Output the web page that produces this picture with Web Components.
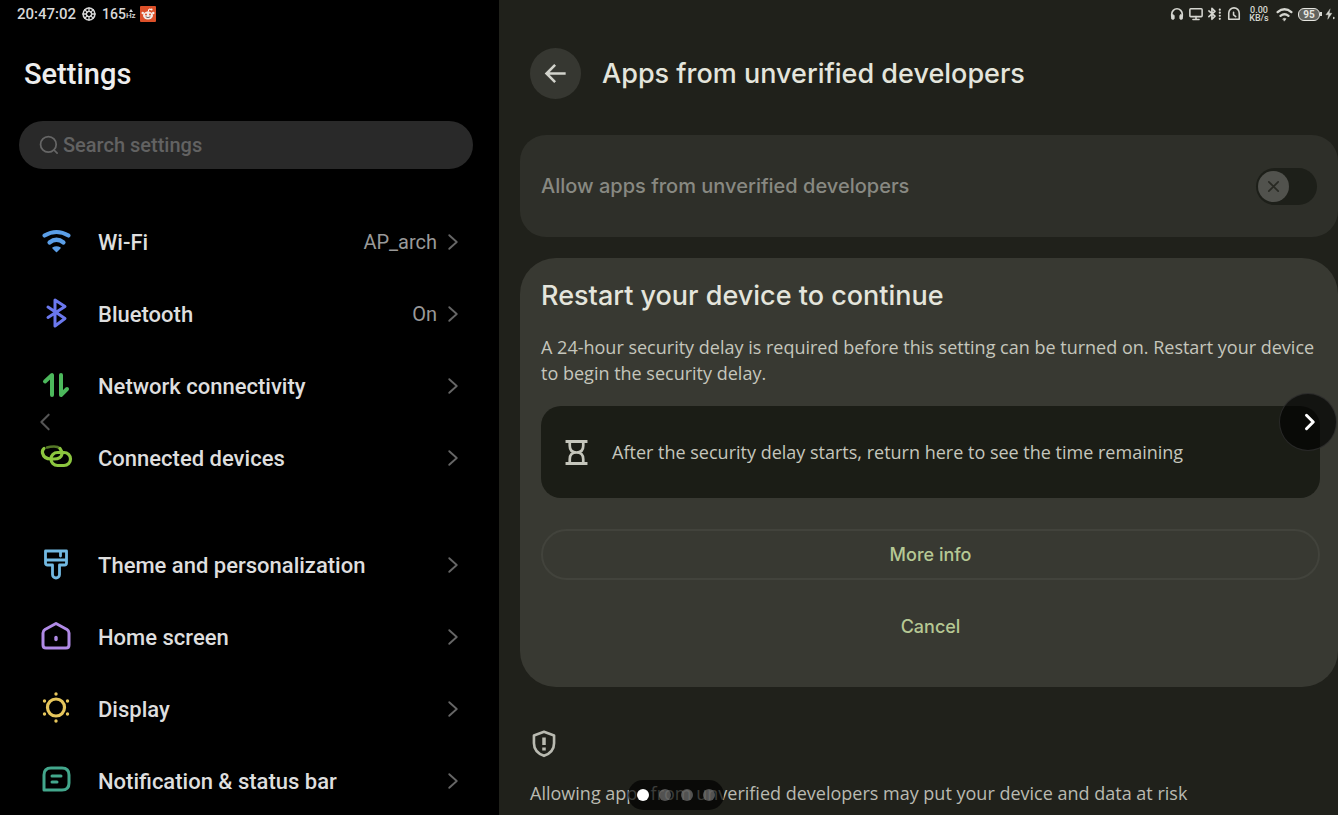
<!DOCTYPE html>
<html lang="en">
<head>
<meta charset="utf-8">
<meta name="viewport" content="width=device-width, initial-scale=1">
<title>Settings</title>
<style>
    body {
        margin: 0;
        background: #000;
        font-family: Roboto, "Liberation Sans", sans-serif;
    }
</style>
</head>
<body>
<settings-app></settings-app>

<script>
const icons = {
    wifi: `<g stroke-width="4.200"><path d="M4.500 9.500Q16.500 2.500 28.500 9.500M9.500 16.500Q16.500 11 23.500 16.500"/></g><path d="M13 22q3.500-2 7 0l-3.500 3.500z" fill="currentColor" stroke-width="1.500"/>`,
    bluetooth: `<path d="M8 9l17 11.500-10 7.500V2l10 6.500L8 19.500" stroke-width="3"/>`,
    network: `<path d="M5 11.500L12 5v20M21 5v20l6-6" stroke-width="4"/>`,
    link: `<path d="M7 5.500Q10 4.500 14 4.500T20 6.500" stroke-width="2.500" opacity=".6"/><path d="M4 6.500Q2 8 2.500 11 4 17 11 17h3q7 0 8-5 0-3-2-5.500" stroke-width="3.200"/><rect x="11" y="10.500" width="19.500" height="13" rx="6.500" stroke-width="3.200"/>`,
    brush: `<path d="M5.500 2h21v12q0 2-2 2h-5v9.500a3.500 3.500 0 0 1-7 0V16h-5q-2 0-2-2zM5.500 11h21M20.500 2v5" stroke-width="2.800"/>`,
    home: `<path d="M16 2.500l11 6q2 1.200 2 3.500v12q0 3-3 3H6q-3 0-3-3V12q0-2.300 2-3.500z" stroke-width="3"/><path d="M16 16.500v2" stroke-width="3.400"/>`,
    sun: `<circle cx="16" cy="14.500" r="8.500" stroke-width="3.200"/><path d="M16 1v.010M16 28v.010M4.500 8v.010M27.500 8v.010M4.500 21v.010M27.500 21v.010" stroke-width="3.400"/>`,
    note: `<path d="M11 3h11q7 0 7 7v8q0 7-7 7H4V10q0-7 7-7zM12 11h9M12 17h5" stroke-width="3"/>`,
    chevron: `<path d="M11 7l10 9-10 9" stroke-width="2.500"/>`,
    search: `<circle cx="15" cy="15" r="12.500" stroke-width="2.800"/><path d="M24 24l5 5" stroke-width="2.800"/>`,
    back: `<path d="M29 16H5M15.500 5l-11 11 11 11" stroke-width="3.300" stroke-linecap="butt" stroke-linejoin="miter"/>`,
    next: `<path d="M14 7l9 9-9 9" stroke-width="4"/>`,
    prev: `<path d="M20.500 7l-9 9 9 9" stroke-width="2.500"/>`,
    cross: `<path d="M6 6l20 20M26 6L6 26" stroke-width="3.500"/>`,
    hourglass: `<g stroke-linecap="butt"><path d="M3 3h26M3 29h26" stroke-width="3.500"/><path d="M8 3v5q0 8 8 8 8 0 8-8V3M8 29v-5q0-8 8-8 8 0 8 8v5" stroke-width="3.200"/></g>`,
    shield: `<path d="M16 2l11.500 4.200V15c0 7-5 12-11.500 14.500C9.500 27 4.500 22 4.500 15V6.200z" stroke-width="3"/><path d="M16 8.500v8.500M16 20v3.500" stroke-width="4" stroke-linecap="butt"/>`,
    globe: `<circle cx="16" cy="16" r="13.500" stroke-width="3.500"/><circle cx="16" cy="16" r="6" stroke-width="3"/><path d="M16 2v8M16 22v8M2 16h8M22 16h8M6 6l6 6M20 20l6 6M26 6l-6 6M12 20l-6 6" stroke-width="3"/>`,
    reddit: `<rect width="32" height="32" rx="2" fill="#dc5029" stroke="none"/><path d="M16 12l2-6 4 1" stroke="#fff" stroke-width="2"/><ellipse cx="16" cy="19" rx="10" ry="8" fill="#f5ece6" stroke="none"/><circle cx="5.500" cy="14" r="2.500" fill="#f5ece6" stroke="none"/><circle cx="26.500" cy="14" r="2.500" fill="#f5ece6" stroke="none"/><circle cx="23" cy="7" r="2.200" fill="#f5ece6" stroke="none"/><circle cx="12" cy="17" r="2" fill="#dc5029" stroke="none"/><circle cx="20" cy="17" r="2" fill="#dc5029" stroke="none"/><path d="M12 22q4 3 8 0" stroke="#555" stroke-width="1.800"/>`,
    headphones: `<path d="M4 21v-5a12 12 0 0 1 24 0v5" stroke-width="3.800"/><rect x="3.500" y="18" width="6" height="10" rx="2" fill="currentColor" stroke-width="2"/><rect x="22.500" y="18" width="6" height="10" rx="2" fill="currentColor" stroke-width="2"/>`,
    monitor: `<rect x="2" y="4" width="28" height="18" rx="2" stroke-width="3.500"/><path d="M16 22v5M9 28.500h14" stroke-width="3.500"/>`,
    btBattery: `<path d="M2 9l14 12-7 7V3l7 7L2 22" stroke-width="3.800"/><path d="M27 6h.010M27 13h.010M27 20h.010M27 27h.010" stroke-width="5"/>`,
    alarm: `<path d="M4 28V14a12 12 0 0 1 24 0v14z" stroke-width="3.600"/><path d="M15 12v6l5 4" stroke-width="3.500"/>`,
    signal: `<path d="M3 11.500Q16 1 29 11.500M8.500 18.500q7.500-6 15 0" stroke-width="4.500"/><path d="M13 24q3-2 6 0l-3 4z" fill="currentColor"/>`,
    bolt: `<path d="M16 3L5 18h7l-2 12 11-16h-7z" fill="currentColor" stroke-width="1"/><path d="M26 25v3" stroke-width="4"/>`
};

class UiIcon extends HTMLElement {
    constructor() {
        super();
        this.attachShadow({mode: "open"});
    }

    connectedCallback() {
        this.shadowRoot.innerHTML = `
            <style>
                :host {
                    display: block;
                    flex: none;
                    width: var(--size, 32px);
                    height: var(--size, 32px);
                }
                svg {
                    display: block;
                    width: 100%;
                    height: 100%;
                    overflow: visible;
                }
            </style>
            <svg viewBox="0 0 32 32" fill="none" stroke="currentColor" stroke-linecap="round" stroke-linejoin="round" aria-hidden="true">${icons[this.getAttribute("name")]}</svg>
        `;
    }
}

class StatusLeft extends HTMLElement {
    constructor() {
        super();
        this.attachShadow({mode: "open"}).innerHTML = `
            <style>
                :host {
                    display: flex;
                    align-items: center;
                    gap: 6px;
                    height: 28px;
                    padding-left: 17px;
                    color: #d8d8d8;
                    font-size: 15px;
                    font-weight: 500;
                }
                ui-icon { --size: 14px; }
                .rate { display: flex; align-items: center; font-size: 14px; }
                .unit { display: flex; flex-direction: column; align-items: center; font-size: 8px; line-height: 8px; }
                .unit::before {
                    content: "";
                    border: 2px solid transparent;
                    border-top: 0;
                    border-bottom: 3px solid currentColor;
                }
                .app { --size: 16px; margin-left: -2px; }
            </style>
            <span>20:47:02</span>
            <ui-icon name="globe"></ui-icon>
            <span class="rate">165<span class="unit">Hz</span></span>
            <ui-icon class="app" name="reddit"></ui-icon>
        `;
    }
}

class StatusRight extends HTMLElement {
    constructor() {
        super();
        this.attachShadow({mode: "open"}).innerHTML = `
            <style>
                :host {
                    display: flex;
                    align-items: center;
                    justify-content: flex-end;
                    gap: 5px;
                    height: 28px;
                    padding-right: 5px;
                    color: #d5d6d0;
                    font-family: Roboto, "Liberation Sans", sans-serif;
                }
                ui-icon { --size: 14px; }
                .speed {
                    width: 20px;
                    margin-left: 3px;
                    text-align: center;
                    font-size: 9px;
                    line-height: 8px;
                    font-weight: 500;
                    white-space: nowrap;
                }
                .wifi { --size: 17px; margin-left: 2px; }
                .battery {
                    display: flex;
                    align-items: center;
                    margin-right: -3px;
                }
                .level {
                    box-sizing: border-box;
                    width: 22px;
                    border: 1px solid currentColor;
                    border-radius: 6px;
                    background: #62635e;
                    color: #e6e6e0;
                    text-align: center;
                    font-size: 10px;
                    line-height: 11px;
                    font-weight: 700;
                }
                .battery::after {
                    content: "";
                    width: 2px;
                    height: 4px;
                    background: currentColor;
                }
                .bolt { --size: 12px; margin-right: -3px; }
            </style>
            <ui-icon name="headphones"></ui-icon>
            <ui-icon name="monitor"></ui-icon>
            <ui-icon name="btBattery"></ui-icon>
            <ui-icon name="alarm"></ui-icon>
            <div class="speed">0.00<br>KB/s</div>
            <ui-icon class="wifi" name="signal"></ui-icon>
            <div class="battery"><span class="level">95</span></div>
            <ui-icon class="bolt" name="bolt"></ui-icon>
        `;
    }
}

class SearchField extends HTMLElement {
    constructor() {
        super();
        this.attachShadow({mode: "open"}).innerHTML = `
            <style>
                :host { display: block; }
                label {
                    display: flex;
                    align-items: center;
                    gap: 4px;
                    height: 48px;
                    padding: 0 20px;
                    border-radius: 24px;
                    background: #292929;
                    color: #666;
                }
                ui-icon { --size: 20px; }
                input {
                    flex: 1;
                    min-width: 0;
                    padding: 0;
                    border: 0;
                    outline: 0;
                    background: none;
                    color: #ddd;
                    font: 500 20px/28px Roboto, "Liberation Sans", sans-serif;
                }
                input::placeholder { color: #626262; opacity: 1; }
            </style>
            <label>
                <ui-icon name="search"></ui-icon>
                <input type="search" placeholder="Search settings" aria-label="Search settings">
            </label>
        `;
    }
}

class SettingsRow extends HTMLElement {
    constructor() {
        super();
        this.attachShadow({mode: "open"});
    }

    connectedCallback() {
        this.shadowRoot.innerHTML = `
            <style>
                :host { display: block; }
                a {
                    display: flex;
                    align-items: center;
                    height: 72px;
                    padding: 0 34px 0 40px;
                    color: #dedede;
                    text-decoration: none;
                    font-size: 22px;
                    font-weight: 500;
                }
                .icon { color: ${this.getAttribute("color")}; }
                .label { flex: 1; margin-left: 26px; white-space: nowrap; }
                .value { margin-right: 4px; color: #999; font-size: 20px; font-weight: 400; }
                .chevron { --size: 24px; color: #666; }
            </style>
            <a href="#">
                <ui-icon class="icon" name="${this.getAttribute("icon")}"></ui-icon>
                <span class="label"><slot></slot></span>
                <span class="value"><slot name="value"></slot></span>
                <ui-icon class="chevron" name="chevron"></ui-icon>
            </a>
        `;
    }
}

class SettingsPane extends HTMLElement {
    constructor() {
        super();
        this.attachShadow({mode: "open"}).innerHTML = `
            <style>
                :host {
                    display: block;
                    background: #000;
                    overflow: hidden;
                }
                h1 {
                    margin: 26px 24px 27px;
                    color: #eee;
                    font-size: 29px;
                    line-height: 40px;
                    font-weight: 500;
                }
                search-field { margin: 0 26px 0 19px; }
                nav {
                    display: flex;
                    flex-direction: column;
                    gap: 35px;
                    margin-top: 37px;
                }
            </style>
            <status-left></status-left>
            <h1>Settings</h1>
            <search-field></search-field>
            <nav>
                <div>
                    <settings-row icon="wifi" color="#5b9fe8">Wi-Fi<span slot="value">AP_arch</span></settings-row>
                    <settings-row icon="bluetooth" color="#6b78ee">Bluetooth<span slot="value">On</span></settings-row>
                    <settings-row icon="network" color="#4cb85c">Network connectivity</settings-row>
                    <settings-row icon="link" color="#8cc63f">Connected devices</settings-row>
                </div>
                <div>
                    <settings-row icon="brush" color="#72b9e2">Theme and personalization</settings-row>
                    <settings-row icon="home" color="#b08ae6">Home screen</settings-row>
                    <settings-row icon="sun" color="#e6c65c">Display</settings-row>
                    <settings-row icon="note" color="#43a78c">Notification &amp; status bar</settings-row>
                </div>
            </nav>
        `;
    }
}

class ToggleCard extends HTMLElement {
    constructor() {
        super();
        this.attachShadow({mode: "open"}).innerHTML = `
            <style>
                :host { display: block; }
                label {
                    display: flex;
                    align-items: center;
                    justify-content: space-between;
                    height: 102px;
                    padding: 0 21px;
                    border-radius: 26px;
                    background: #2e2f29;
                    color: #888982;
                    font-size: 20px;
                    font-weight: 500;
                }
                .switch {
                    display: grid;
                    align-items: center;
                    width: 61px;
                    height: 37px;
                    border-radius: 19px;
                    background: #1d1f19;
                }
                .switch > * { grid-area: 1 / 1; }
                input { width: 100%; height: 100%; margin: 0; opacity: 0; }
                .knob {
                    display: grid;
                    place-items: center;
                    width: 31px;
                    height: 31px;
                    margin-left: 2px;
                    border-radius: 50%;
                    background: #51524d;
                    color: #282923;
                }
                ui-icon { --size: 15px; }
            </style>
            <label>
                <slot></slot>
                <span class="switch">
                    <input type="checkbox" role="switch" disabled>
                    <span class="knob"><ui-icon name="cross"></ui-icon></span>
                </span>
            </label>
        `;
    }
}

class RestartCard extends HTMLElement {
    constructor() {
        super();
        this.attachShadow({mode: "open"}).innerHTML = `
            <style>
                :host {
                    display: flex;
                    flex-direction: column;
                    padding: 20px 18px 35px 21px;
                    border-radius: 36px;
                    background: #383932;
                }
                h2 {
                    margin: 0 0 20px;
                    color: #e4e5dc;
                    font-size: 27px;
                    line-height: 36px;
                    font-weight: 500;
                }
                p {
                    margin: 0;
                    color: #c5c6bc;
                    font-family: "Open Sans", sans-serif;
                    font-size: 18px;
                    line-height: 26px;
                }
                .note {
                    display: flex;
                    align-items: center;
                    gap: 22px;
                    height: 92px;
                    margin: 20px 0 31px;
                    padding: 0 22px;
                    border-radius: 20px;
                    background: #1b1d16;
                    color: #c5c6bc;
                }
                ui-icon { --size: 27px; }
                button {
                    height: 51px;
                    border: 2px solid #42433c;
                    border-radius: 26px;
                    background: none;
                    color: #b6c894;
                    font: inherit;
                    font-size: 18px;
                    font-weight: 500;
                }
                .plain { margin-top: 21px; border-color: transparent; }
            </style>
            <h2>Restart your device to continue</h2>
            <p>A 24-hour security delay is required before this setting can be turned on. Restart your device to begin the security delay.</p>
            <div class="note">
                <ui-icon name="hourglass"></ui-icon>
                <p>After the security delay starts, return here to see the time remaining</p>
            </div>
            <button type="button">More info</button>
            <button type="button" class="plain">Cancel</button>
        `;
    }
}

class DetailPane extends HTMLElement {
    constructor() {
        super();
        this.attachShadow({mode: "open"}).innerHTML = `
            <style>
                :host {
                    display: block;
                    background: #20211b;
                    overflow: hidden;
                    font-family: Inter, "Open Sans", sans-serif;
                }
                header {
                    display: flex;
                    align-items: center;
                    gap: 21px;
                    margin: 20px 0 36px 31px;
                }
                button {
                    display: grid;
                    place-items: center;
                    width: 51px;
                    height: 51px;
                    padding: 0;
                    border: 0;
                    border-radius: 50%;
                    background: #363731;
                    color: #d2d3cc;
                }
                .back { --size: 25px; }
                h1 {
                    margin: 0;
                    color: #e4e5dc;
                    font-size: 27px;
                    line-height: 36px;
                    font-weight: 500;
                }
                main {
                    display: flex;
                    flex-direction: column;
                    gap: 21px;
                    margin-left: 21px;
                }
                footer {
                    margin: 43px 20px 0 31px;
                    color: #b9bab1;
                }
                .shield { --size: 28px; }
                p {
                    margin: 22px 0 0;
                    font-family: "Open Sans", sans-serif;
                    font-size: 18px;
                    line-height: 26px;
                }
            </style>
            <status-right></status-right>
            <header>
                <button type="button" aria-label="Back"><ui-icon class="back" name="back"></ui-icon></button>
                <h1>Apps from unverified developers</h1>
            </header>
            <main>
                <toggle-card>Allow apps from unverified developers</toggle-card>
                <restart-card></restart-card>
            </main>
            <footer>
                <ui-icon class="shield" name="shield"></ui-icon>
                <p>Allowing apps from unverified developers may put your device and data at risk</p>
            </footer>
        `;
    }
}

// gallery controls that float above both panes
class GalleryControls extends HTMLElement {
    constructor() {
        super();
        this.attachShadow({mode: "open"}).innerHTML = `
            <style>
                :host {
                    position: absolute;
                    inset: 0;
                    pointer-events: none;
                }
                button {
                    display: grid;
                    place-items: center;
                    padding: 0;
                    border: 0;
                    background: none;
                    pointer-events: auto;
                }
                .prev, .next {
                    position: absolute;
                    top: 393px;
                    width: 58px;
                    height: 58px;
                    border-radius: 50%;
                }
                .prev { --size: 26px; left: 16px; color: #555; }
                .next {
                    --size: 24px;
                    right: 1px;
                    border: 1px solid rgba(60, 60, 60, .6);
                    background: rgba(0, 0, 0, .65);
                    color: #fff;
                }
                .dots {
                    position: absolute;
                    bottom: 5px;
                    left: 50%;
                    display: flex;
                    align-items: center;
                    gap: 10px;
                    height: 30px;
                    padding: 0 9px;
                    border-radius: 15px;
                    background: rgba(0, 0, 0, .68);
                    transform: translateX(-41px);
                }
                .dots button {
                    width: 12px;
                    height: 12px;
                    border-radius: 50%;
                    background: rgba(130, 130, 130, .6);
                }
                .dots .current { background: #fff; }
            </style>
            <button class="prev" type="button" aria-label="Previous"><ui-icon name="prev"></ui-icon></button>
            <button class="next" type="button" aria-label="Next"><ui-icon name="next"></ui-icon></button>
            <div class="dots">
                <button class="current" type="button" aria-label="Picture 1"></button>
                <button type="button" aria-label="Picture 2"></button>
                <button type="button" aria-label="Picture 3"></button>
                <button type="button" aria-label="Picture 4"></button>
            </div>
        `;
    }
}

class SettingsApp extends HTMLElement {
    constructor() {
        super();
        this.attachShadow({mode: "open"}).innerHTML = `
            <style>
                :host {
                    position: relative;
                    display: grid;
                    grid-template-columns: 373fr 627fr;
                    height: 100vh;
                    overflow: hidden;
                }
            </style>
            <settings-pane></settings-pane>
            <detail-pane></detail-pane>
            <gallery-controls></gallery-controls>
        `;
    }
}

customElements.define("ui-icon", UiIcon);
customElements.define("status-left", StatusLeft);
customElements.define("status-right", StatusRight);
customElements.define("search-field", SearchField);
customElements.define("settings-row", SettingsRow);
customElements.define("settings-pane", SettingsPane);
customElements.define("toggle-card", ToggleCard);
customElements.define("restart-card", RestartCard);
customElements.define("detail-pane", DetailPane);
customElements.define("gallery-controls", GalleryControls);
customElements.define("settings-app", SettingsApp);
</script>
</body>
</html>
